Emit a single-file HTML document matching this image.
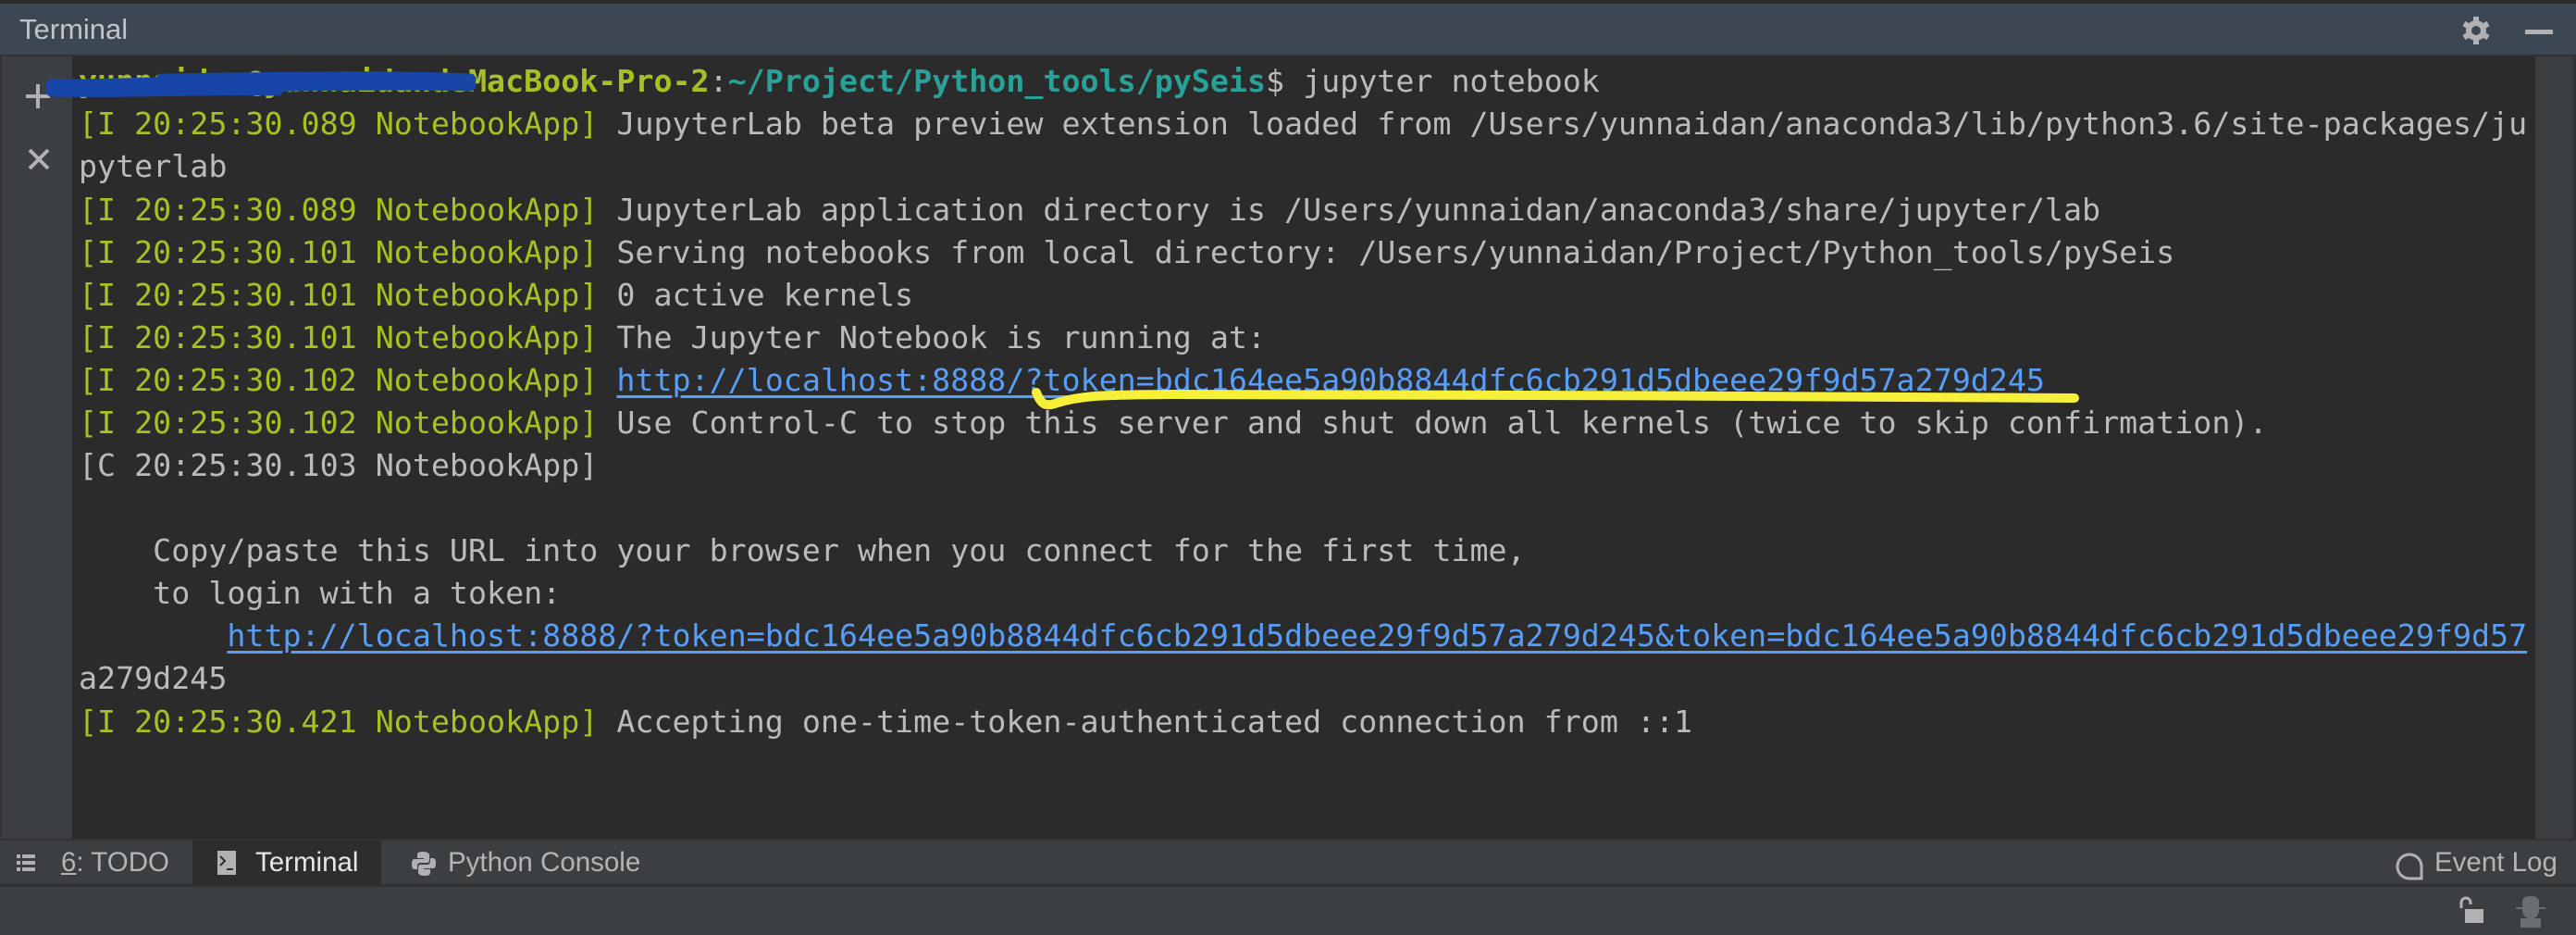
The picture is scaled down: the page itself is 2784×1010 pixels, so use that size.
<!DOCTYPE html>
<html><head><meta charset="utf-8"><style>
*{margin:0;padding:0;box-sizing:border-box}
body{width:2784px;height:1010px;background:#3c3f41;position:relative;overflow:hidden;font-family:"Liberation Sans",sans-serif}
#top{position:absolute;left:0;top:0;width:2784px;height:4px;background:#2b2b2b}
#hdr{position:absolute;left:0;top:4px;width:2784px;height:57px;background:#3d4754;border-bottom:2px solid #323232}
#hdr .t{position:absolute;left:21px;top:10px;font-size:31px;color:#c0c4c8}
#gut{position:absolute;left:0;top:61px;width:78px;height:845px;background:#3c3f41;border-left:2px solid #313335}
#term{position:absolute;left:78px;top:61px;width:2662px;height:845px;background:#2b2b2b}
#rg{position:absolute;left:2740px;top:61px;width:44px;height:845px;background:#3c3f41;border-right:3px solid #313335}
.l{position:absolute;left:85px;font-family:"DejaVu Sans Mono","Liberation Mono",monospace;font-size:33.3px;color:#bbbbbb;white-space:pre;line-height:46px;margin-top:3px}
.g{color:#a8c023}.b{font-weight:bold}.tl{color:#2aa198;font-weight:bold}
.u{color:#589df6;text-decoration:underline;text-underline-offset:5px;text-decoration-thickness:3px}
#tabs{position:absolute;left:0;top:906px;width:2784px;height:52px;background:#3c3f41;border-top:2px solid #323232;border-bottom:3px solid #323232}
.tab{position:absolute;top:0;height:48px;font-size:29.5px;color:#b4b4b4;line-height:48px}
#status{position:absolute;left:0;top:960px;width:2784px;height:50px;background:#3c3f41}
</style></head><body>
<div id="top"></div>
<div id="hdr"><span class="t">Terminal</span>
<svg style="position:absolute;left:2660px;top:12px" width="32" height="34" viewBox="0 0 32 34"><g fill="#afb1b3"><circle cx="16" cy="17" r="11"/><rect x="13" y="2" width="6" height="30"/><rect x="13" y="2" width="6" height="30" transform="rotate(60 16 17)"/><rect x="13" y="2" width="6" height="30" transform="rotate(120 16 17)"/></g><circle cx="16" cy="17" r="5" fill="#3d4754"/></svg>
<div style="position:absolute;left:2729px;top:28px;width:30px;height:5px;background:#afb1b3"></div>
</div>
<div id="gut">
<svg style="position:absolute;left:24px;top:28px" width="30" height="30"><path d="M15 2 V28 M2 15 H28" stroke="#afb1b3" stroke-width="4"/></svg>
<svg style="position:absolute;left:27px;top:98px" width="26" height="26"><path d="M3 3 L23 23 M23 3 L3 23" stroke="#afb1b3" stroke-width="4"/></svg>
</div>
<div id="term"></div>
<div id="rg"></div>

<div class="l" style="top:62px"><span class="g b">yunnaidan@yunnaidandeMacBook-Pro-2</span>:<span class="tl">~/Project/Python_tools/pySeis</span>$ jupyter notebook</div>
<div class="l" style="top:108px"><span class="g">[I 20:25:30.089 NotebookApp]</span> JupyterLab beta preview extension loaded from /Users/yunnaidan/anaconda3/lib/python3.6/site-packages/ju</div>
<div class="l" style="top:154px">pyterlab</div>
<div class="l" style="top:201px"><span class="g">[I 20:25:30.089 NotebookApp]</span> JupyterLab application directory is /Users/yunnaidan/anaconda3/share/jupyter/lab</div>
<div class="l" style="top:247px"><span class="g">[I 20:25:30.101 NotebookApp]</span> Serving notebooks from local directory: /Users/yunnaidan/Project/Python_tools/pySeis</div>
<div class="l" style="top:293px"><span class="g">[I 20:25:30.101 NotebookApp]</span> 0 active kernels</div>
<div class="l" style="top:339px"><span class="g">[I 20:25:30.101 NotebookApp]</span> The Jupyter Notebook is running at:</div>
<div class="l" style="top:385px"><span class="g">[I 20:25:30.102 NotebookApp]</span> <span class="u">http://localhost:8888/?token=bdc164ee5a90b8844dfc6cb291d5dbeee29f9d57a279d245</span></div>
<div class="l" style="top:431px"><span class="g">[I 20:25:30.102 NotebookApp]</span> Use Control-C to stop this server and shut down all kernels (twice to skip confirmation).</div>
<div class="l" style="top:477px">[C 20:25:30.103 NotebookApp]</div>
<div class="l" style="top:569px">    Copy/paste this URL into your browser when you connect for the first time,</div>
<div class="l" style="top:615px">    to login with a token:</div>
<div class="l" style="top:661px">        <span class="u">http://localhost:8888/?token=bdc164ee5a90b8844dfc6cb291d5dbeee29f9d57a279d245&amp;token=bdc164ee5a90b8844dfc6cb291d5dbeee29f9d57</span></div>
<div class="l" style="top:707px">a279d245</div>
<div class="l" style="top:754px"><span class="g">[I 20:25:30.421 NotebookApp]</span> Accepting one-time-token-authenticated connection from ::1</div>

<svg style="position:absolute;left:0;top:0" width="2784" height="1010">
<path d="M56 92 C120 93 190 87 290 89 M56 98 C140 100 220 95 300 97 M175 86 C330 84 420 82 508 86 M175 94 C330 92 420 90 508 92" stroke="#1846a8" stroke-width="13" fill="none" stroke-linecap="round"/>
<path d="M1120 424 C1124 434 1128 440 1140 436 C1170 426 1200 427 1260 426 C1600 426 1900 428 2242 430" stroke="#f6f03a" stroke-width="10" fill="none" stroke-linecap="round"/>
</svg>

<div id="tabs">
<svg style="position:absolute;left:18px;top:14px" width="20" height="20"><g fill="#afb1b3"><rect x="0" y="1" width="4" height="4"/><rect x="6" y="1" width="14" height="4"/><rect x="0" y="8" width="4" height="4"/><rect x="6" y="8" width="14" height="4"/><rect x="0" y="15" width="4" height="4"/><rect x="6" y="15" width="14" height="4"/></g></svg>
<div class="tab" style="left:66px"><u>6</u>: TODO</div>
<div class="tab" style="left:208px;width:204px;background:#2d2d2d"></div>
<svg style="position:absolute;left:235px;top:11px" width="20" height="26"><rect width="20" height="26" fill="#afb1b3"/><path d="M3 6 L8 11 L3 16" stroke="#2d2d2d" stroke-width="2" fill="none"/><rect x="10" y="19" width="7" height="2" fill="#2d2d2d"/></svg>
<div class="tab" style="left:276px;color:#e6e6e6">Terminal</div>
<svg style="position:absolute;left:445px;top:11px" width="26" height="28" viewBox="0 0 26 28"><path d="M12 1 C6 1 6 3 6 5 V8 H13 V9 H3 C0 9 0 13 0 15 C0 18 1 20 3 20 H6 V16 C6 14 8 13 10 13 H16 C18 13 19 12 19 10 V5 C19 2 16 1 12 1Z" fill="#afb1b3"/><path d="M14 27 C20 27 20 25 20 23 V20 H13 V19 H23 C26 19 26 15 26 13 C26 10 25 8 23 8 H20 V12 C20 14 18 15 16 15 H10 C8 15 7 16 7 18 V23 C7 26 10 27 14 27Z" fill="#afb1b3"/></svg>
<div class="tab" style="left:484px">Python Console</div>
<svg style="position:absolute;left:2588px;top:12px" width="32" height="32"><path d="M29 29 H16 A13 13 0 1 1 29 16 Z" stroke="#afb1b3" stroke-width="3" fill="none"/></svg>
<div class="tab" style="left:2631px;font-size:29.5px">Event Log</div>
</div>
<div id="status">
<svg style="position:absolute;left:2656px;top:8px" width="30" height="30"><path d="M4 13 V7 A5 5 0 0 1 14 7 V9" stroke="#afb1b3" stroke-width="3" fill="none"/><rect x="8" y="14" width="20" height="15" fill="#afb1b3"/></svg>
<svg style="position:absolute;left:2718px;top:8px" width="34" height="36"><path d="M8 6 Q8 0 17 0 Q26 0 26 6 V12 H33 V14 H26 Q26 22 20 24 H28 V34 H6 V24 H14 Q8 22 8 14 H1 V12 H8Z" fill="#6b6e71"/></svg>
</div>
</body></html>
